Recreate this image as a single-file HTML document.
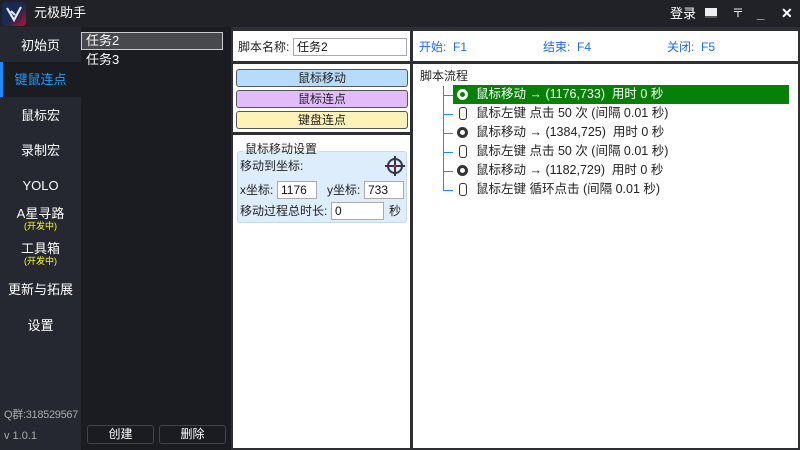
<!DOCTYPE html>
<html><head><meta charset="utf-8"><style>
*{margin:0;padding:0;box-sizing:border-box}
body{width:800px;height:450px;overflow:hidden;background:#2d2f33;font-family:"Liberation Sans","Noto Sans CJK SC",sans-serif;font-size:12px;position:relative;white-space:nowrap;line-height:1.5}
.abs{position:absolute}
#title{left:0;top:0;width:800px;height:27px;background:#202228}
#side{left:0;top:27px;width:81px;height:423px;background:#252830}
.nav{position:absolute;left:0;width:81px;text-align:center;color:#fff;font-size:13px}
#list{left:81px;top:27px;width:150px;height:423px;background:#1b1c21}
.panel{background:#fff;position:absolute}
.btn{position:absolute;left:236px;width:172px;height:18px;border:1px solid #555;border-radius:3px;text-align:center;font-size:12px;line-height:17px;color:#222}
.inp{position:absolute;border:1px solid #aaa;background:#fff;height:18px;font-size:12px;line-height:17px;padding-left:3px;color:#111}
.row{position:absolute;left:476px;font-size:12.5px;color:#222}
.ic{position:absolute;left:457px}
</style></head><body>
<div id="title" class="abs">
 <div class="abs" style="left:2px;top:2px;width:24px;height:24px;border-radius:4px;background:linear-gradient(135deg,#1a2a50 55%,#c01030);"></div>
 <svg class="abs" style="left:4px;top:4px" width="20" height="20" viewBox="0 0 20 20"><path d="M3 4 L10 16 L17 3 M7 7 L11 11" stroke="#dfe8ff" stroke-width="2.2" fill="none"/></svg>
 <div class="abs" style="left:34px;top:3px;color:#fff;font-size:13px">元极助手</div>
 <div class="abs" style="left:670px;top:4px;color:#fff;font-size:13px">登录</div>
 <div class="abs" style="left:705px;top:8px;width:12px;height:10px;background:#eee;border-bottom:2px solid #555"></div>
 <div class="abs" style="left:732px;top:4px;color:#eee;font-size:12px">〒</div>
 <div class="abs" style="left:757px;top:4px;color:#fff;font-size:13px;font-weight:bold">_</div>
 <div class="abs" style="left:781px;top:3px;color:#fff;font-size:14px;font-weight:bold">✕</div>
</div>
<div id="side" class="abs">
 <div class="nav" style="top:9px">初始页</div>
 <div class="abs" style="left:0;top:35px;width:81px;height:35px;background:#1b1c21;border-left:3px solid #1a8cff"></div>
 <div class="nav" style="top:43px;color:#1a9cff">键鼠连点</div>
 <div class="nav" style="top:79px">鼠标宏</div>
 <div class="nav" style="top:114px">录制宏</div>
 <div class="nav" style="top:149px">YOLO</div>
 <div class="nav" style="top:177px">A星寻路</div>
 <div class="nav" style="top:193px;font-size:9px;color:#ff0">(开发中)</div>
 <div class="nav" style="top:212px">工具箱</div>
 <div class="nav" style="top:228px;font-size:9px;color:#ff0">(开发中)</div>
 <div class="nav" style="top:253px">更新与拓展</div>
 <div class="nav" style="top:289px">设置</div>
 <div class="abs" style="left:4px;top:380px;color:#aaa;font-size:11px;letter-spacing:-0.3px">Q群:318529567</div>
 <div class="abs" style="left:4px;top:401px;color:#aaa;font-size:11px">v 1.0.1</div>
</div>
<div id="list" class="abs">
 <div class="abs" style="left:0;top:5px;width:142px;height:18px;background:#48494d;border:1px solid #ccc"></div>
 <div class="abs" style="left:5px;top:4px;color:#fff;font-size:13px">任务2</div>
 <div class="abs" style="left:5px;top:23px;color:#fff;font-size:13px">任务3</div>
 <div class="abs" style="left:6px;top:398px;width:67px;height:19px;border:1px solid #444;border-radius:3px;color:#fff;text-align:center;line-height:17px">创建</div>
 <div class="abs" style="left:78px;top:398px;width:67px;height:19px;border:1px solid #444;border-radius:3px;color:#fff;text-align:center;line-height:17px">删除</div>
</div>
<div class="panel" style="left:233px;top:31px;width:177px;height:30px"></div>
<div class="abs" style="left:238px;top:38px;color:#222">脚本名称:</div>
<div class="inp" style="left:293px;top:38px;width:114px">任务2</div>
<div class="panel" style="left:233px;top:64px;width:177px;height:68px"></div>
<div class="btn" style="top:69px;background:#b7dcfb">鼠标移动</div>
<div class="btn" style="top:90px;background:#e0bdfa">鼠标连点</div>
<div class="btn" style="top:111px;background:#fef2b9">键盘连点</div>
<div class="panel" style="left:233px;top:135px;width:177px;height:313px"></div>
<div class="abs" style="left:237px;top:151px;width:170px;height:72px;background:#deedfc;border:1px solid #c8d8ea;border-radius:3px"></div>
<div class="abs" style="left:243px;top:141px;color:#222;background:linear-gradient(#fff 55%,#deedfc 55%);padding:0 2px;line-height:1.3;margin-top:1px">鼠标移动设置</div>
<div class="abs" style="left:240px;top:157px;color:#222">移动到坐标:</div>
<div class="abs" style="left:387px;top:158px;width:16px;height:16px;border:2px solid #334;border-radius:50%"></div>
<div class="abs" style="left:394px;top:156px;width:2px;height:20px;background:#334"></div>
<div class="abs" style="left:385px;top:165px;width:20px;height:2px;background:#334"></div>
<div class="abs" style="left:394px;top:165px;width:2px;height:2px;background:#e22"></div>
<div class="abs" style="left:240px;top:181px;color:#222">x坐标:</div>
<div class="inp" style="left:277px;top:181px;width:40px">1176</div>
<div class="abs" style="left:327px;top:181px;color:#222">y坐标:</div>
<div class="inp" style="left:364px;top:181px;width:40px">733</div>
<div class="abs" style="left:240px;top:202px;color:#222">移动过程总时长:</div>
<div class="inp" style="left:331px;top:202px;width:53px">0</div>
<div class="abs" style="left:389px;top:202px;color:#222">秒</div>
<div class="panel" style="left:413px;top:31px;width:385px;height:30px"></div>
<div class="abs" style="left:419px;top:38px;color:#1a6aff">开始:&nbsp; F1</div>
<div class="abs" style="left:543px;top:38px;color:#1a6aff">结束:&nbsp; F4</div>
<div class="abs" style="left:667px;top:38px;color:#1a6aff">关闭:&nbsp; F5</div>
<div class="panel" style="left:413px;top:64px;width:385px;height:384px"></div>
<div class="abs" style="left:420px;top:67px;color:#222">脚本流程</div>
<div class="abs" style="left:443px;top:86px;width:1px;height:105px;background:#1a8cff"></div>
<div class="abs" style="left:443px;top:95px;width:10px;height:1px;background:#1a8cff"></div>
<div class="abs" style="left:443px;top:114px;width:10px;height:1px;background:#1a8cff"></div>
<div class="abs" style="left:443px;top:133px;width:10px;height:1px;background:#1a8cff"></div>
<div class="abs" style="left:443px;top:152px;width:10px;height:1px;background:#1a8cff"></div>
<div class="abs" style="left:443px;top:171px;width:10px;height:1px;background:#1a8cff"></div>
<div class="abs" style="left:443px;top:190px;width:10px;height:1px;background:#1a8cff"></div>
<div class="abs" style="left:453px;top:85px;width:336px;height:19px;background:#078007"></div>
<div class="ic" style="top:89px;width:11px;height:11px;border:3px solid #fff;border-radius:50%"></div>
<div class="row" style="top:85px;color:#fff">鼠标移动 → (1176,733)&nbsp; 用时 0 秒</div>
<div class="ic" style="left:459px;top:107px;width:8px;height:13px;border:1px solid #333;border-radius:3px"></div>
<div class="row" style="top:104px">鼠标左键 点击 50 次 (间隔 0.01 秒)</div>
<div class="ic" style="top:127px;width:11px;height:11px;border:3px solid #333;border-radius:50%"></div>
<div class="row" style="top:123px">鼠标移动 → (1384,725)&nbsp; 用时 0 秒</div>
<div class="ic" style="left:459px;top:145px;width:8px;height:13px;border:1px solid #333;border-radius:3px"></div>
<div class="row" style="top:142px">鼠标左键 点击 50 次 (间隔 0.01 秒)</div>
<div class="ic" style="top:165px;width:11px;height:11px;border:3px solid #333;border-radius:50%"></div>
<div class="row" style="top:161px">鼠标移动 → (1182,729)&nbsp; 用时 0 秒</div>
<div class="ic" style="left:459px;top:183px;width:8px;height:13px;border:1px solid #333;border-radius:3px"></div>
<div class="row" style="top:180px">鼠标左键 循环点击 (间隔 0.01 秒)</div>
</body></html>
